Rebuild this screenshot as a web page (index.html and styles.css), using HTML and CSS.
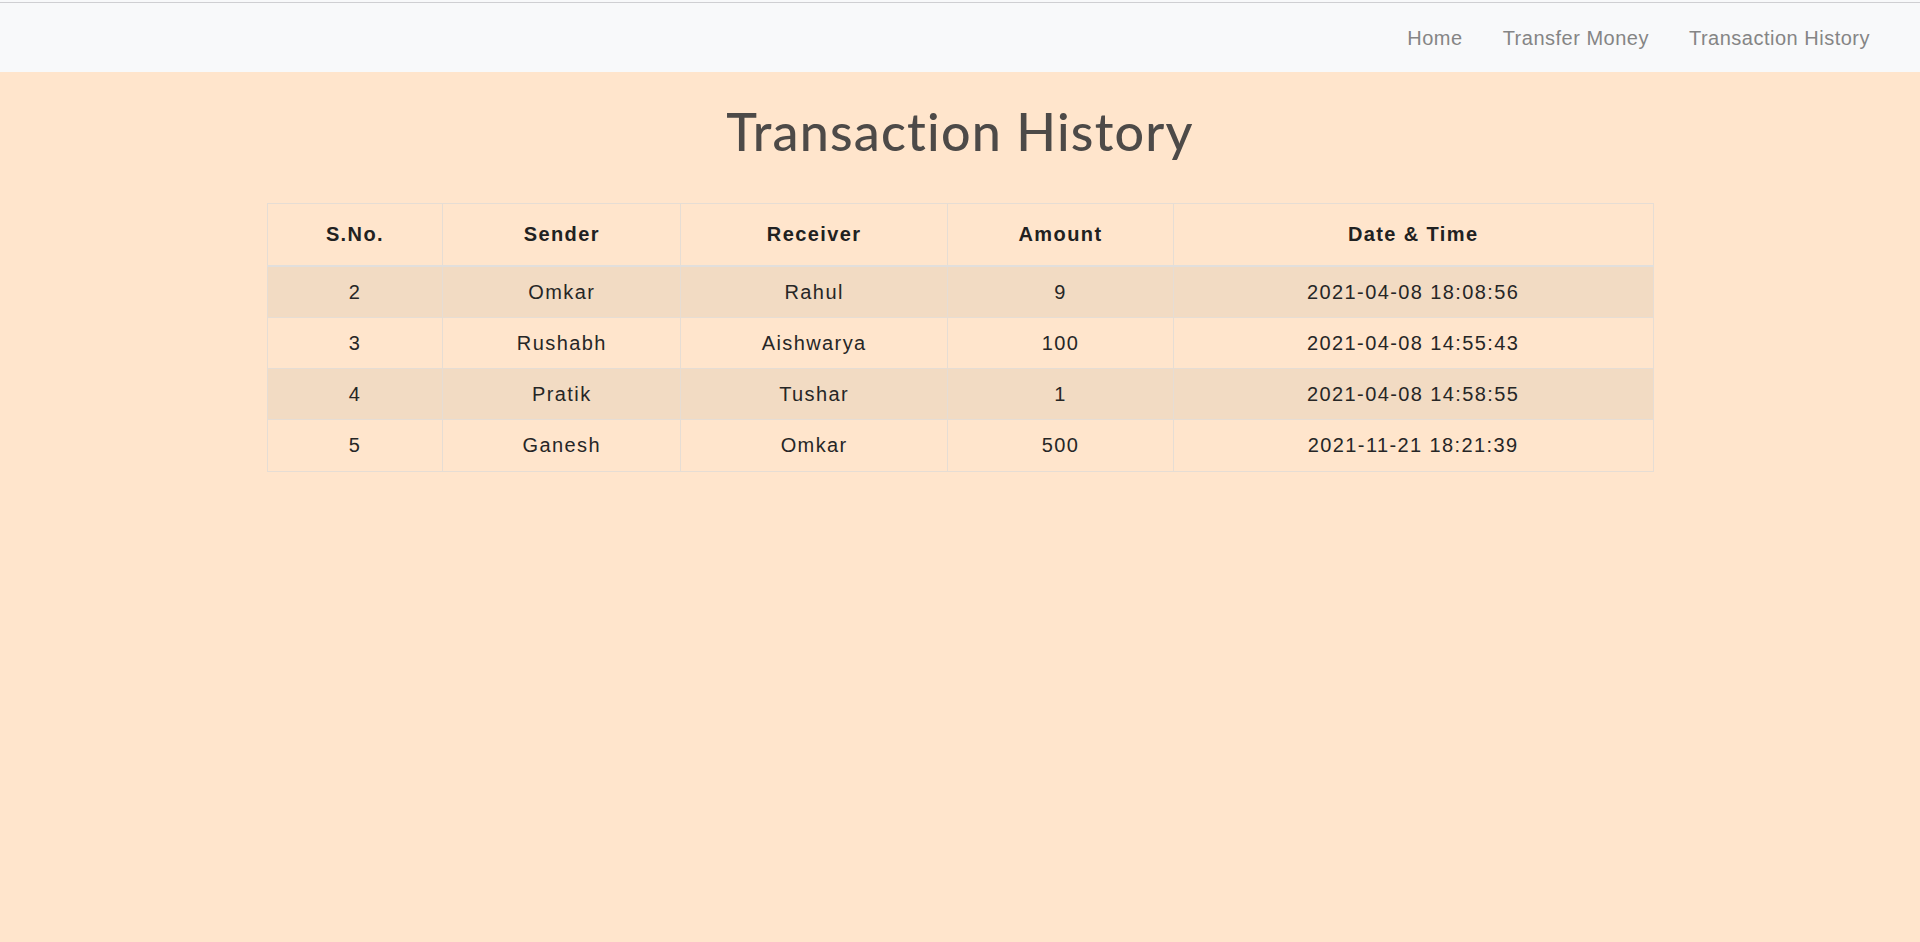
FILE: index.html
```html
<!DOCTYPE html>
<html lang="en">
<head>
<meta charset="utf-8">
<title>Transaction History</title>
<link rel="stylesheet" href="styles.css">
</head>
<body>
<div class="topline"></div>
<nav class="navbar">
  <ul class="nav-links">
    <li><a href="#" class="nav-link">Home</a></li>
    <li><a href="#" class="nav-link">Transfer Money</a></li>
    <li><a href="#" class="nav-link">Transaction History</a></li>
  </ul>
</nav>
<main class="content">
  <h1 class="page-title">Transaction History</h1>
  <table class="history">
    <thead>
      <tr>
        <th class="c1">S.No.</th>
        <th class="c2">Sender</th>
        <th class="c3">Receiver</th>
        <th class="c4">Amount</th>
        <th class="c5">Date &amp; Time</th>
      </tr>
    </thead>
    <tbody>
      <tr class="odd"><td>2</td><td>Omkar</td><td>Rahul</td><td>9</td><td>2021-04-08 18:08:56</td></tr>
      <tr><td>3</td><td>Rushabh</td><td>Aishwarya</td><td>100</td><td>2021-04-08 14:55:43</td></tr>
      <tr class="odd"><td>4</td><td>Pratik</td><td>Tushar</td><td>1</td><td>2021-04-08 14:58:55</td></tr>
      <tr><td>5</td><td>Ganesh</td><td>Omkar</td><td>500</td><td>2021-11-21 18:21:39</td></tr>
    </tbody>
  </table>
</main>
</body>
</html>
```

FILE: styles.css
```css
* { box-sizing: border-box; }
html, body {
  margin: 0;
  padding: 0;
  background: #ffe5cc;
  font-family: "Liberation Sans", Arial, sans-serif;
  min-height: 100%;
}
body { min-height: 942px; }

.topline {
  height: 3px;
  background: #f8f9fa;
  border-bottom: 1px solid #cfcfd2;
}

.navbar {
  height: 69px;
  background: #f8f9fa;
  display: flex;
  justify-content: flex-end;
  align-items: center;
  padding-right: 30px;
}

.nav-links {
  list-style: none;
  margin: 0;
  padding: 0;
  display: flex;
}

.nav-link {
  display: block;
  padding: 0 20px;
  font-size: 20px;
  letter-spacing: 0.5px;
  color: #858585;
  text-decoration: none;
  line-height: 30px;
}

.content {
  display: flex;
  flex-direction: column;
  align-items: center;
}

.page-title {
  margin: 28px 0 0;
  font-family: Lato, "Open Sans", sans-serif;
  font-weight: 500;
  font-size: 52px;
  letter-spacing: 1.2px;
  line-height: 62px;
  color: #4d4a48;
}

.history {
  margin-top: 41px;
  width: 1387px;
  border-collapse: collapse;
  border: 1px solid #e2dcd6;
  color: #262626;
  font-size: 20px;
  letter-spacing: 1.4px;
  text-align: center;
}

.history th {
  font-weight: bold;
  padding: 15px 8px 16px;
  line-height: 30px;
  border: 1px solid #e6ddd4;
  border-bottom: 2px solid #e2dfdc;
  color: #212121;
}

.history td {
  padding: 10px 8px;
  line-height: 30px;
  border: 1px solid #e6ddd4;
  border-top: 1px solid #e2dfdc;
}

.history tbody tr:last-child td { padding-bottom: 11px; }

.history tr.odd td { background: #f2dbc3; }

.c1 { width: 176px; }
.c2 { width: 238px; }
.c3 { width: 267px; }
.c4 { width: 226px; }
.c5 { width: 480px; }
```
